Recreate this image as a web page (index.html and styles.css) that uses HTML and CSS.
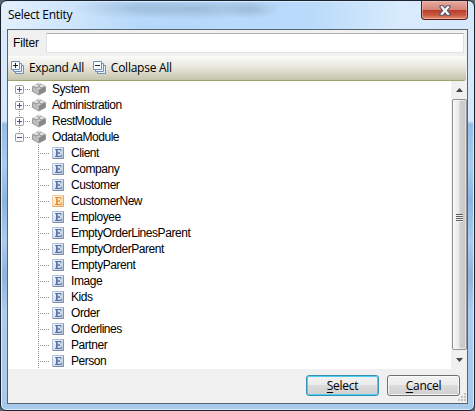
FILE: index.html
```html
<!DOCTYPE html>
<html lang="en">
<head>
<meta charset="utf-8">
<title>Select Entity</title>
<link rel="stylesheet" href="styles.css">
</head>
<body>
<svg class="defs" aria-hidden="true">
  <defs>
    <linearGradient id="eb" x1="0" y1="0" x2="1" y2="1"><stop offset="0" stop-color="#f7faff"/><stop offset="1" stop-color="#b9c8e2"/></linearGradient>
    <linearGradient id="eo" x1="0" y1="0" x2="1" y2="1"><stop offset="0" stop-color="#fff8ec"/><stop offset="1" stop-color="#ffd193"/></linearGradient>
    <symbol id="cube" viewBox="0 0 14 14">
      <path d="M.5 4.5 7 1.4l6.5 3v5L6.8 13 .5 9.5z" fill="#999" stroke="#888" stroke-width=".7"/>
      <path d="M.8 4.6 7 1.5l6.2 3-6.3 3.2z" fill="#d4d4d4"/>
      <path d="m1 5 5.8 2.8v4.7L1 9.4z" fill="#bcbcbc"/>
      <path d="M7 7.8 13.2 5v4.3L7 12.5z" fill="#868686"/>
      <path d="M2.2 3.7v1.6q2 1.4 4 0V3.7M7.6 4v1.7q2 1.3 4 0V4M5 1.5v1.7q2 1.3 4 0V1.5" fill="#aaa" stroke="#858585" stroke-width=".5"/>
      <ellipse cx="4.2" cy="3.8" rx="2" ry="1" fill="#eee"/><ellipse cx="9.6" cy="4" rx="2" ry="1" fill="#e8e8e8"/><ellipse cx="7" cy="1.6" rx="2" ry="1" fill="#ddd"/>
    </symbol>
    <symbol id="stack" viewBox="0 0 13 13">
      <path d="M4.5 4.5h8v8h-8z" fill="#e9f1fb" stroke="#7190b8"/>
      <path d="M2.5 2.5h8v8h-8z" fill="#e9f1fb" stroke="#7190b8"/>
      <path d="M.5.5h8v8h-8z" fill="#fafcff" stroke="#7190b8"/>
    </symbol>
    <symbol id="entity" viewBox="0 0 12 12">
      <path d="M.5.5h11v11H.5z" stroke="currentColor" stroke-opacity=".4"/>
      <path d="M.5 11.5h11V.5" fill="none" stroke="currentColor" stroke-opacity=".5"/>
      <path d="M3 2.5h6v1.8M3 9.5h6.3V7.7M5 6h2.5M7.3 4.9v2.2" fill="none" stroke="currentColor" stroke-width=".9"/>
      <path d="M4.9 2.5v7" stroke="currentColor" stroke-width="1.6"/>
    </symbol>
  </defs>
</svg>
<div class="window">
  <header class="titlebar">
    <span class="title">Select Entity</span>
    <button class="close" aria-label="Close"><svg width="12" height="11" viewBox="0 0 12 11"><path d="M1 .7h3.2L6 3 7.8.7H11v1.7L8.3 5.4 11 8.6v1.7H7.8L6 8l-1.8 2.3H1V8.6l2.7-3.2L1 2.4z" fill="#fff" stroke="#52546b" stroke-width="1.1"/></svg></button>
  </header>
  <main class="client">
    <div class="filter"><label for="f">Filter</label><input id="f" type="text"></div>
    <div class="toolbar">
      <span class="tool"><svg width="13" height="13"><use href="#stack"/><path d="M2 4.5h5M4.5 2v5" stroke="#222"/></svg><span class="tool-text expand">Expand All</span></span>
      <span class="tool"><svg width="13" height="13"><use href="#stack"/><path d="M2 4.5h5" stroke="#222"/></svg><span class="tool-text collapse">Collapse All</span></span>
    </div>
    <div class="body">
      <ul class="tree" id="tree"></ul>
      <div class="scroll">
        <svg class="arrow" width="7" height="4"><path d="M0 4 3.5 0 7 4z" fill="#444"/></svg>
        <div class="thumb"><i></i><i></i><i></i><i></i></div>
        <svg class="arrow" width="7" height="4"><path d="M0 0h7L3.5 4z" fill="#444"/></svg>
      </div>
    </div>
    <footer class="footer">
      <button class="btn primary"><span><u>S</u>elect</span></button>
      <button class="btn"><span><u>C</u>ancel</span></button>
      <svg class="grip" width="9" height="9"><path d="M7 0h2v2H7zM4 3h2v2H4zM7 3h2v2H7zM1 6h2v2H1zM4 6h2v2H4zM7 6h2v2H7z" fill="#c2c2c2"/></svg>
    </footer>
  </main>
</div>
<script src="tree.js"></script>
</body>
</html>
```
FILE: styles.css
```css
* { box-sizing: border-box; }
body { margin: 0; width: 475px; height: 411px; overflow: hidden; background: #5c6670; font: 12px "Liberation Sans", sans-serif; color: #000; }
.defs { position: absolute; width: 0; height: 0; }
.window {
  width: 475px; height: 411px; padding: 0 6px 6px; display: flex; flex-direction: column;
  border: 1px solid #1b222c; border-radius: 7px 7px 6px 6px;
  box-shadow: inset 0 0 0 1px #d8edff;
  background:
    radial-gradient(ellipse 30px 10px at 250px 8px, #8eaac590, #8eaac500),
    radial-gradient(ellipse 60px 11px at 130px 7px, #8eaac570, #8eaac500),
    radial-gradient(ellipse 75px 11px at 192px 8px, #8eaac5a0, #8eaac500),
    linear-gradient(90deg, #e3f0fd 0, #cde4fb 75px, #b5d8fb 140px, #b9dafa 310px, #d9ebfc 400px, #d4e8fb 100%) 0 0 / 100% 29px no-repeat,
    linear-gradient(180deg, #d9eafb 0, #d5e8fb 120px, #93bce6 123px, #a8ccf0 165px, #8bb5df 200px, #a9ccef 240px, #8fb3db 275px, #abcdef 310px, #a6c9ec 100%);
}
.titlebar { height: 28px; display: flex; justify-content: space-between; padding-left: 1px; }
.title { font: 12px/28px "Open Sans", sans-serif; letter-spacing: -.27px; }
.close { width: 47px; height: 19px; padding: 0; border: 1px solid #581d20; border-top: 0; border-radius: 0 0 4px 4px; background: linear-gradient(#e7aaa0, #d58579 48%, #b83b29 50%, #c95b43 80%, #e39878); box-shadow: inset 0 0 0 1px #f4c4b880; display: flex; justify-content: center; align-items: center; }
.client { flex: 1; border: 1px solid #56666f; background: #f0f0f0; display: flex; flex-direction: column; min-height: 0; }
.filter { height: 26px; display: flex; align-items: center; padding: 0 3px 1px 5px; }
.filter label { width: 33px; letter-spacing: -.15px; }
.filter input { flex: 1; min-width: 0; height: 20px; border: 1px solid #e2e3ea; border-top-color: #abadb3; border-right-color: #dbdfe6; border-radius: 1px; background: #fff; padding: 0; }
.toolbar { height: 25px; display: flex; align-items: center; gap: 9px; padding: 0 3px 1px; margin-right: 1px; border-bottom: 1px solid #a3a36f; border-radius: 0 0 3px 0; background: linear-gradient(#fafaf8, #e9e8df 45%, #c5c4ac); }
.tool { display: flex; align-items: center; gap: 5px; }
.tool-text { font: 12px/18px "Open Sans", sans-serif; letter-spacing: -.25px; white-space: nowrap; }
.expand { letter-spacing: -.36px; }
.body { flex: 1; min-height: 0; display: flex; background: #fff; }
.tree { flex: 1; margin: 0; padding: 0; list-style: none; overflow: hidden; }
.row { height: 16px; display: flex; align-items: center; white-space: nowrap; }
.row svg { flex: none; }
.row .name { line-height: 16px; font-size: 12px; letter-spacing: -.45px; margin-left: 7px; }
.parent .name { margin-left: 6px; }
.blue { fill: url(#eb); color: #506c9c; }
.orange { fill: url(#eo); color: #e28a33; }
.lines { fill: none; stroke: #929292; stroke-dasharray: 1 1; }
.box { fill: #fafafa; stroke: #989898; }
.sign { stroke: #3f5796; }
.scroll { width: 16px; background: #f0f0f0; display: flex; flex-direction: column; align-items: center; padding: 7px 0; }
.arrow { flex: none; }
.thumb { flex: 1; width: 15px; margin: 7px 0 8px; border: 1px solid #929292; border-radius: 2px; background: linear-gradient(90deg, #f7f7f7, #e9e9eb 45%, #cfcfd3 55%, #c5c5ca); box-shadow: inset 0 0 0 1px #ffffff80; display: flex; flex-direction: column; justify-content: center; align-items: center; gap: 1px; padding-bottom: 15px; }
.thumb i { width: 7px; height: 1px; background: #606060; box-shadow: 0 1px #eee; }
.footer { height: 34px; display: flex; justify-content: flex-end; align-items: flex-start; gap: 8px; padding: 6px 7px 0; position: relative; }
.btn { width: 73px; height: 21px; padding: 0; border: 1px solid #707070; border-radius: 3px; background: linear-gradient(#f3f3f3, #ebebeb 48%, #dcdcdc 50%, #cfcfcf); box-shadow: inset 0 0 0 1px #ffffffb0; font: 12px/17px "Open Sans", sans-serif; letter-spacing: -.3px; color: #000; }
.primary { border-color: #3c8fb0; box-shadow: inset 0 0 0 1px #48d0f7; }
.btn u { text-underline-offset: 2px; }
.grip { position: absolute; right: 1px; bottom: 1px; }
```
FILE: tree.js
```js
const modules = [
  { name: "System" }, { name: "Administration" }, { name: "RestModule" },
  { name: "OdataModule", children: ["Client", "Company", "Customer", "CustomerNew", "Employee", "EmptyOrderLinesParent", "EmptyOrderParent", "EmptyParent", "Image", "Kids", "Order", "Orderlines", "Partner", "Person"] }
];
const tree = document.getElementById("tree");

function addRow(kind, svg, name) {
  const li = document.createElement("li");
  li.className = "row " + kind;
  li.innerHTML = svg + '<span class="name">' + name + "</span>";
  tree.append(li);
}

modules.forEach((m, i) => {
  const top = i ? 0 : 8;
  const bottom = m.children ? 8 : 16;
  const plus = m.children ? "" : "M11.5 6v5";
  addRow("parent", `<svg width="38" height="16"><path class="lines" d="M11.5 ${top}V${bottom}M17 8.5h6"/><rect class="box" x="7.5" y="4.5" width="8" height="8" rx="1"/><path class="sign" d="M9 8.5h5${plus}"/><use href="#cube" x="24" y="1" width="14" height="14"/></svg>`, m.name);
  (m.children || []).forEach(c => {
    const tone = c === "CustomerNew" ? "orange" : "blue";
    addRow("child", `<svg width="56" height="16"><path class="lines" d="M30.5 0v16M32 8.5h9"/><use class="${tone}" href="#entity" x="44" y="2" width="12" height="12"/></svg>`, c);
  });
});
```
